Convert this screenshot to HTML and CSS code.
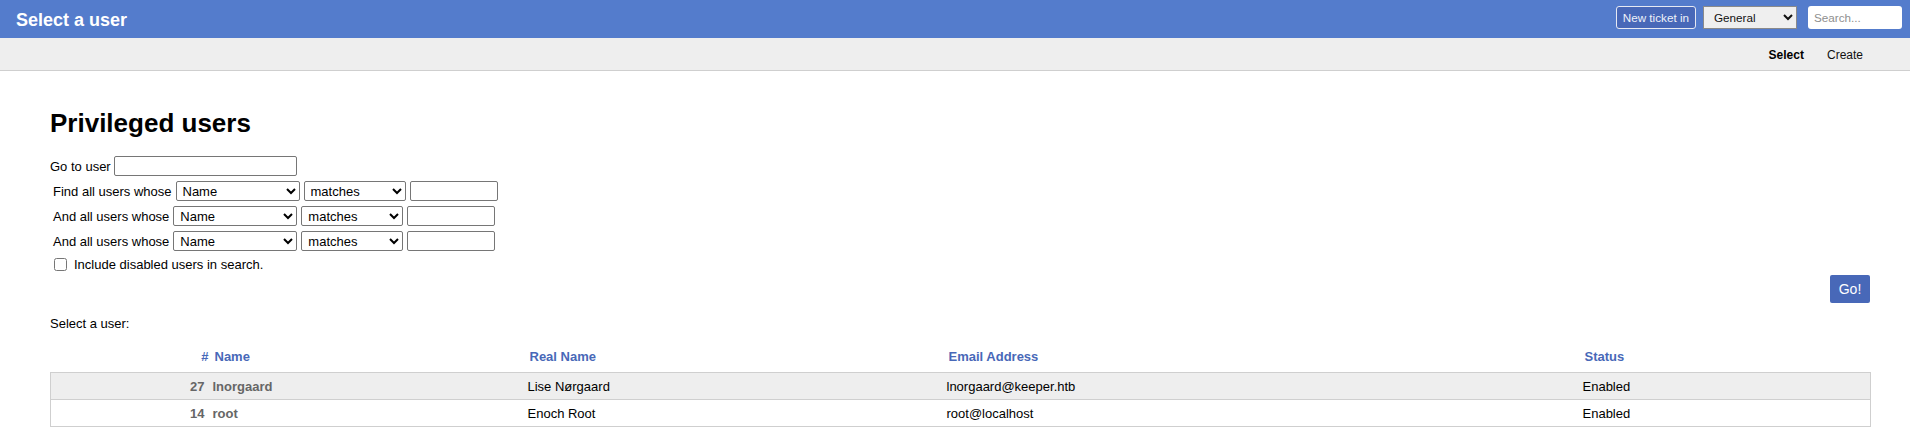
FILE: index.html
```html
<!DOCTYPE html>
<html lang="en">
<head>
<meta charset="utf-8">
<title>Select a user</title>
<link rel="stylesheet" href="styles.css">
</head>
<body>
<header class="topbar">
  <h1 class="page-title">Select a user</h1>
  <div class="topbar-tools">
    <button class="new-ticket" type="button">New ticket in</button>
    <select class="queue-select"><option>General</option></select>
    <input class="search" type="text" placeholder="Search...">
  </div>
</header>
<nav class="subnav">
  <a class="subnav-link active">Select</a>
  <a class="subnav-link">Create</a>
</nav>
<main class="content">
  <h2 class="heading">Privileged users</h2>
  <form class="search-form">
    <div class="goto-row">
      <span class="label">Go to user</span>
      <input class="goto-input" type="text">
    </div>
    <div class="find-row">
      <span class="label">Find all users whose</span>
      <select class="field-select"><option>Name</option></select>
      <select class="op-select"><option>matches</option></select>
      <input class="value-input" type="text">
    </div>
    <div class="find-row">
      <span class="label">And all users whose</span>
      <select class="field-select"><option>Name</option></select>
      <select class="op-select"><option>matches</option></select>
      <input class="value-input" type="text">
    </div>
    <div class="find-row">
      <span class="label">And all users whose</span>
      <select class="field-select"><option>Name</option></select>
      <select class="op-select"><option>matches</option></select>
      <input class="value-input" type="text">
    </div>
    <label class="check-row"><input class="check" type="checkbox"><span>Include disabled users in search.</span></label>
    <div class="submit-row"><button class="go" type="button">Go!</button></div>
  </form>
  <p class="select-label">Select a user:</p>
  <table class="users">
    <colgroup>
      <col class="col-id"><col class="col-name"><col class="col-real"><col class="col-email"><col class="col-status">
    </colgroup>
    <thead>
      <tr>
        <th class="th-id">#</th>
        <th>Name</th>
        <th>Real Name</th>
        <th>Email Address</th>
        <th>Status</th>
      </tr>
    </thead>
    <tbody>
      <tr class="odd">
        <td class="td-id">27</td>
        <td class="td-name">lnorgaard</td>
        <td>Lise Nørgaard</td>
        <td>lnorgaard@keeper.htb</td>
        <td>Enabled</td>
      </tr>
      <tr>
        <td class="td-id">14</td>
        <td class="td-name">root</td>
        <td>Enoch Root</td>
        <td>root@localhost</td>
        <td>Enabled</td>
      </tr>
    </tbody>
  </table>
</main>
</body>
</html>
```

FILE: styles.css
```css
* { box-sizing: border-box; }

body {
  margin: 0;
  font-family: "Liberation Sans", Arial, sans-serif;
  font-size: 13px;
  line-height: 15px;
  color: #000;
  background: #fff;
}

.topbar {
  height: 38px;
  background: #547ccc;
  display: flex;
  justify-content: space-between;
  align-items: flex-start;
}

.page-title {
  margin: 0;
  padding: 10px 0 0 16px;
  font-size: 18px;
  line-height: 21px;
  font-weight: bold;
  color: #fff;
}

.topbar-tools {
  display: flex;
  align-items: center;
  padding-top: 6px;
  padding-right: 8px;
}

.new-ticket {
  height: 23px;
  padding: 0 6px;
  margin: 0 7px 0 0;
  background: #4868b8;
  border: 1px solid #e6e9f3;
  border-radius: 3px;
  color: #eef1f8;
  font-family: "Liberation Sans", Arial, sans-serif;
  font-size: 11.7px;
}

.queue-select {
  width: 94px;
  height: 23px;
  margin: 0 11px 0 0;
  padding: 0 0 0 6px;
  background-color: #efefef;
  border: 1px solid #8a8a8a;
  border-radius: 0;
  color: #111;
  font-family: "Liberation Sans", Arial, sans-serif;
  font-size: 11.7px;
}

.search {
  width: 94px;
  height: 23px;
  margin: 0;
  padding: 0 6px;
  border: none;
  border-radius: 3px;
  background: #fff;
  font-family: "Liberation Sans", Arial, sans-serif;
  font-size: 11.7px;
}
.search::placeholder { color: #8f8f8f; }

.subnav {
  height: 33px;
  background: #eee;
  border-bottom: 1px solid #cfcfcf;
  display: flex;
  justify-content: flex-end;
  gap: 23px;
  padding: 10px 47px 0 0;
  font-size: 12px;
  line-height: 14px;
}

.subnav-link { color: #111; }
.subnav-link.active { font-weight: bold; color: #000; }

.content {
  padding: 0 40px 0 50px;
}

.heading {
  margin: 37px 0 0;
  font-size: 26px;
  line-height: 30px;
  font-weight: bold;
}

.search-form { margin: 18px 0 0; }

.goto-row, .find-row {
  display: flex;
  align-items: center;
  height: 20px;
}

.goto-row { gap: 3px; }

.find-row {
  gap: 4px;
  padding-left: 3px;
  margin-top: 5px;
}

.goto-input, .value-input {
  height: 20px;
  margin: 0;
  border: 1px solid #767676;
  border-radius: 2px;
  padding: 1px 2px;
  font-size: 13px;
}

.goto-input { width: 183px; }
.value-input { width: 88px; }

.field-select, .op-select {
  height: 20px;
  margin: 0;
  padding: 0 0 0 2px;
  background-color: #fff;
  border: 1px solid #767676;
  border-radius: 2px;
  font-family: "Liberation Sans", Arial, sans-serif;
  font-size: 13px;
  color: #000;
}
.field-select { width: 124px; }
.op-select { width: 102px; }

.check-row {
  display: flex;
  align-items: center;
  margin-top: 6px;
  height: 15px;
}

.check {
  width: 13px;
  height: 13px;
  margin: 0 7px 0 4px;
}

.submit-row {
  display: flex;
  justify-content: flex-end;
  margin-top: 3px;
}

.go {
  width: 40px;
  height: 28px;
  margin: 0;
  padding: 0;
  background: #4868b8;
  border: none;
  border-radius: 2px;
  color: #fff;
  font-family: "Liberation Sans", Arial, sans-serif;
  font-size: 14px;
}

.select-label {
  margin: 13px 0 0;
}

.users {
  margin-top: 14px;
  width: 100%;
  table-layout: fixed;
  border-collapse: collapse;
}

.col-id { width: 159px; }
.col-name { width: 315px; }
.col-real { width: 419px; }
.col-email { width: 636px; }
.col-status { width: 291px; }

.users th {
  padding: 4px 0 8px 5px;
  text-align: left;
  font-weight: bold;
  color: #4868b8;
}

.users th.th-id {
  text-align: right;
  padding-right: 1px;
}

.users tbody tr {
  border: 1px solid #cfcfcf;
}

.users tbody tr.odd { background: #eee; }

.users td {
  padding: 6px 3px 5px 3px;
  white-space: nowrap;
}

.users td.td-id {
  text-align: right;
  padding-right: 5px;
  font-weight: bold;
  color: #666;
}

.users td.td-name {
  font-weight: bold;
  color: #666;
}
```
